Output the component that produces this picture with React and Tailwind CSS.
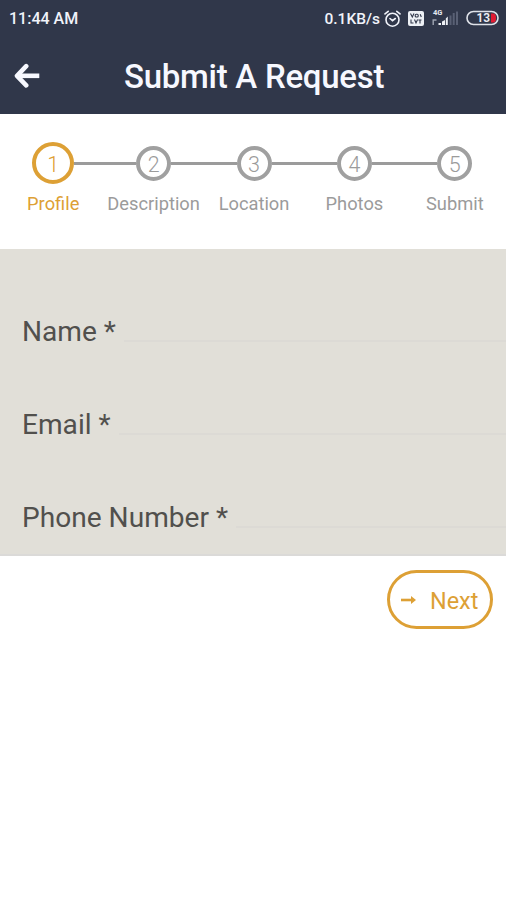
const steps = [
  { n: 1, label: "Profile", active: true },
  { n: 2, label: "Description" },
  { n: 3, label: "Location" },
  { n: 4, label: "Photos" },
  { n: 5, label: "Submit" },
];

function StatusBar() {
  return (
    <div className="flex h-[38px] items-center pr-[7px] pl-[9px] text-[#f1f3fa]">
      <span className="text-[16px] leading-none font-medium whitespace-nowrap">11:44 AM</span>
      <span className="mt-px ml-auto text-[15.5px] leading-[17px] font-medium whitespace-nowrap">0.1KB/s</span>
      <svg className="mb-px ml-[4px] h-[18px] w-[17px]" viewBox="0 0 17 18" fill="none" stroke="currentColor" strokeWidth="1.6" strokeLinecap="round">
        <circle cx="8.5" cy="9.7" r="6.5" />
        <path d="M1 3.9 4.2 1.3M16 3.9l-3.2-2.6M6 8.5l2.5 2.2L11.3 8.5" />
      </svg>
      <svg className="mb-[2px] ml-[7px] h-[15px] w-[16px]" viewBox="0 0 16 15">
        <rect width="16" height="15" rx="2" fill="#edf0f5" />
        <g fill="none" stroke="#30374a" strokeWidth="1.1">
          <path d="M2.5 2.5 4.3 6 6 2.5M12.2 3.2 13.3 6" />
          <rect x="7.2" y="3.2" width="3" height="2.8" rx="1" />
          <path d="M3 8.5V12h2.5M6.5 8.5 8 12l1.6-3.5M10.3 9h3.2M12 9v3.5" />
        </g>
      </svg>
      <svg className="mb-[2px] ml-[8px] h-[18px] w-[27px]" viewBox="0 0 27 18">
        <text x="1" y="6" fontSize="7.5" fontWeight="700" fill="#e5e8ef">4G</text>
        <path d="M0.5 11h4M1.2 11v5" stroke="#9fa5b2" strokeWidth="1.4" />
        <path d="M6.5 16v-2H9v2zM10 16v-3.5l3-1.5v5zM13.8 16V9.5l2-2V16z" fill="#edf0f5" />
        <path d="M17.5 16V6.5h2V16zM20.7 16V4h2v12zM24 16V2.5h2V16z" fill="#596074" />
      </svg>
      <svg className="mb-[2px] ml-[7px] h-[16px] w-[33px]" viewBox="0 0 33 16">
        <path d="M25 3.5h2.5q2.5 0 2.5 4.5t-2.5 4.5H25z" fill="#e11b32" />
        <rect x="1" y="1.5" width="31" height="13" rx="6.5" fill="none" stroke="#dfe2e9" strokeWidth="1.6" />
        <text x="10.5" y="12.2" fontSize="12" fontWeight="600" fill="#edf0f5">13</text>
      </svg>
    </div>
  );
}

function Header() {
  return (
    <header className="h-[114px] bg-[#30374a]">
      <StatusBar />
      <div className="flex h-[76px] items-center pl-[14px] text-[#f7f8ff]">
        <svg className="h-[26px] w-[26px] shrink-0" viewBox="0 0 26 26" fill="none" stroke="currentColor" strokeWidth="4.6" strokeLinecap="round" strokeLinejoin="round">
          <path d="M12.2 3.2 3 12.8l9.2 9.6" />
          <path d="M4 12.8H25.3" strokeLinecap="butt" />
        </svg>
        <h1 className="ml-[84px] text-[33px] leading-none font-medium tracking-[-0.27px] whitespace-nowrap">Submit A Request</h1>
      </div>
    </header>
  );
}

function Step({ n, label, active, first, last }) {
  return (
    <li className={active ? "flex flex-1 flex-col items-center text-[#dda035]" : "flex flex-1 flex-col items-center text-[#9b9b9b]"}>
      <div className="flex h-[42px] w-full items-center">
        <span className={first ? "h-[3px] flex-1" : "h-[3px] flex-1 bg-[#9b9b9b]"} />
        <span
          className={
            active
              ? "flex size-[42px] items-center justify-center rounded-full border-4 border-[#dda035] text-[21.5px] leading-none"
              : "flex size-[35px] items-center justify-center rounded-full border-4 border-[#a0a0a0] text-[21.5px] leading-none"
          }
        >
          <span className="relative top-[2px] font-light">{n}</span>
        </span>
        <span className={last ? "h-[3px] flex-1" : "h-[3px] flex-1 bg-[#9b9b9b]"} />
      </div>
      <span className="mt-[9px] text-[18.3px] leading-[22px] whitespace-nowrap">{label}</span>
    </li>
  );
}

function Field({ label }) {
  return (
    <div className="flex h-[93px] items-end pl-[22px]">
      <label className="mb-px pr-[8px] text-[28.1px] leading-[34px] whitespace-nowrap text-[#51504d]">{label} *</label>
      <span className="mb-[8px] h-[2px] flex-1 bg-[#dcdad5]" />
    </div>
  );
}

export default function App() {
  return (
    <div className="h-[900px] w-[506px] overflow-hidden bg-white font-[Roboto,sans-serif]">
      <Header />
      <ol className="flex h-[135px] pt-[28px] pr-px pl-[3px]">
        {steps.map((s, i) => (
          <Step key={s.n} {...s} first={i === 0} last={i === steps.length - 1} />
        ))}
      </ol>
      <form className="h-[307px] border-b-2 border-[#dbdad8] bg-[#e1dfd8] pt-[8px]">
        <Field label="Name" />
        <Field label="Email" />
        <Field label="Phone Number" />
      </form>
      <div className="flex justify-end pt-[14px] pr-[13px]">
        <button className="flex h-[59px] w-[106px] items-center rounded-full border-[3px] border-[#dda035] pl-[11px] text-[#dda035]">
          <svg className="h-[8px] w-[15px]" viewBox="0 0 15 8">
            <path d="M0 4h12" stroke="currentColor" strokeWidth="2.6" />
            <path d="M10 0 15 4l-5 4z" fill="currentColor" />
          </svg>
          <span className="mt-[4px] ml-[14px] text-[23.4px] leading-none">Next</span>
        </button>
      </div>
    </div>
  );
}
